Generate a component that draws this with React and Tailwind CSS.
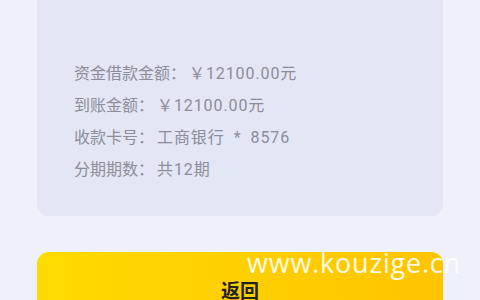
const rows = [
  ['资金借款金额', '￥12100.00元'],
  ['到账金额', '￥12100.00元'],
  ['收款卡号', '工商银行\u2002*\u20028576'],
  ['分期期数', '共12期'],
];

const LoanResult = () => {
  return (
    <div className="relative min-h-[300px] w-full overflow-hidden bg-[#eff1fa] px-[37px] font-['Roboto','Noto_Sans_CJK_SC',sans-serif]">
      {/* Info card */}
      <div className="-mt-4 flex flex-col gap-[11px] rounded-[12px] bg-[#e3e6f4] pl-[37px] pt-[79px] pb-[36px]">
        {rows.map(([label, value]) => (
          <div key={label} className="whitespace-nowrap text-[16px] leading-[21px] text-[#8b8d99]">
            {label}：<span className="ml-[3px] tracking-[0.9px]">{value}</span>
          </div>
        ))}
      </div>

      {/* Return button */}
      <button className="mt-[36px] flex h-[60px] w-full items-start justify-center rounded-[12px] bg-gradient-to-r from-[#ffdb00] to-[#ffc400] pt-[26px]">
        <span className="font-['Noto_Sans_CJK_SC',sans-serif] text-[19px] font-bold leading-[24px] text-[#222]">返回</span>
      </button>

      {/* Watermark */}
      <div className="pointer-events-none absolute left-[247px] top-[245px] font-['Open_Sans',sans-serif] text-[27px] leading-[36px] tracking-[0.8px] text-white/90">
        www.kouzige.cn
      </div>
    </div>
  );
};

export default LoanResult;
